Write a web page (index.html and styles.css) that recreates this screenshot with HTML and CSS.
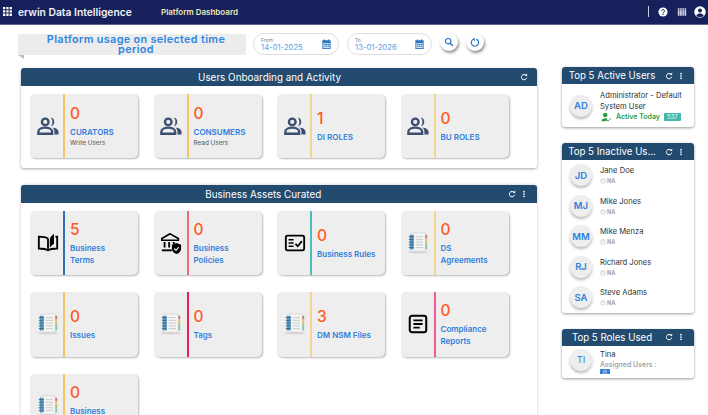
FILE: index.html
```html
<!DOCTYPE html>
<html lang="en">
<head>
<meta charset="utf-8">
<title>Platform Dashboard</title>
<link rel="stylesheet" href="styles.css">
</head>
<body>
<svg class="defs" width="0" height="0" aria-hidden="true">
  <defs>
    <symbol id="i-users" viewBox="0 0 24 24">
      <circle cx="9" cy="7.500" r="3.600" fill="none" stroke="currentColor" stroke-width="2.600"/>
      <path d="M15 2.800a4.800 4.800 0 0 1 0 9.400c1.100-1.200 1.800-2.800 1.800-4.700S16.100 4 15 2.800z" fill="currentColor"/>
      <path d="M1.500 20.500v-2.300c0-2.800 3.800-4.400 7.500-4.400s7.500 1.600 7.500 4.400v2.300z" fill="none" stroke="currentColor" stroke-width="2.600"/>
      <path d="M17 13.500c3.200.4 6.500 2 6.500 4.700v3h-4.500v-3c0-1.900-.8-3.400-2-4.700z" fill="currentColor"/>
    </symbol>
    <symbol id="i-book" viewBox="0 0 24 24">
      <path d="M12 7C10 5.600 7 5 2 5v13c5 0 8 .6 10 2 2-1.400 5-2 10-2V5h-2" fill="none" stroke="currentColor" stroke-width="2"/>
      <path d="M12 7v13" stroke="currentColor" stroke-width="2"/>
      <path d="M14 9c0-3 2-5 4.500-7v11c-2 1-3.500 2.500-4.500 4z" fill="currentColor"/>
    </symbol>
    <symbol id="i-bank" viewBox="0 0 24 24">
      <path d="M11 2 2 7v2h18V7z" fill="none" stroke="currentColor" stroke-width="1.800"/>
      <path d="M5 11v6M10 11v6M15 11v2" stroke="currentColor" stroke-width="2"/>
      <path d="M2 19h11v2H2z" fill="currentColor"/>
      <path d="M18 12l5 2v4c0 3-2.200 5-5 6-2.800-1-5-3-5-6v-4z" fill="currentColor"/>
      <path d="M15.500 18l2 2 3-3.500" fill="none" stroke="#eee" stroke-width="1.300"/>
    </symbol>
    <symbol id="i-rules" viewBox="0 0 24 24">
      <rect x="2" y="4" width="20" height="16" rx="2" fill="none" stroke="currentColor" stroke-width="2"/>
      <path d="M5 8.500h5.500M5 12h5.500M5 15.500h5.500" stroke="currentColor" stroke-width="1.800"/>
      <path d="M12.500 13l2.500 2.500 4.500-5.500" fill="none" stroke="currentColor" stroke-width="2"/>
    </symbol>
    <symbol id="i-article" viewBox="0 0 24 24">
      <rect x="3" y="3" width="18" height="18" rx="2.500" fill="none" stroke="currentColor" stroke-width="2.200"/>
      <path d="M7 8h10M7 12h10M7 16h7" stroke="currentColor" stroke-width="2"/>
    </symbol>
    <symbol id="i-note" viewBox="0 0 24 24">
      <ellipse cx="12" cy="22" rx="11" ry="1.200" fill="#d4d4d4"/>
      <rect x="4" y="1" width="16" height="20" rx="1" fill="#f4f4f4" stroke="#c9c9c9" stroke-width=".6"/>
      <rect x="3" y="3" width="4.500" height="16" fill="#5f9cc2"/>
      <path d="M2 5h5M2 8h5M2 11h5M2 14h5M2 17h5" stroke="#2c6488" stroke-width="1"/>
      <path d="M9.500 5h8M9.500 8h8M9.500 11h8M9.500 14h8M9.500 17h8" stroke="#c2c2c2" stroke-width=".9"/>
      <rect x="20" y="3" width="2" height="4" fill="#c9766e"/>
      <rect x="20" y="7" width="2" height="4" fill="#e3c074"/>
      <rect x="20" y="11" width="2" height="4" fill="#a3c67e"/>
      <rect x="20" y="15" width="2" height="4" fill="#7cc4be"/>
    </symbol>
    <symbol id="i-cal" viewBox="0 0 24 24">
      <path d="M3 4h3V2h3v2h6V2h3v2h3v19H3z" fill="#2f74c0"/>
      <path d="M5 10h14v11H5z" fill="#cfe2f6"/>
      <path d="M7 12h3v2H7zM11 12h3v2h-3zM15 12h3v2h-3zM7 16h3v2H7zM11 16h3v2h-3zM15 16h3v2h-3z" fill="#2f74c0"/>
    </symbol>
    <symbol id="i-refresh" viewBox="0 0 24 24">
      <path d="M18.500 7.500A8 8 0 1 0 20 14" fill="none" stroke="currentColor" stroke-width="3"/>
      <path d="M14 9h7.500V1.500z" fill="currentColor"/>
    </symbol>
    <symbol id="i-dots" viewBox="0 0 24 24">
      <circle cx="12" cy="5" r="2.600" fill="currentColor"/>
      <circle cx="12" cy="12" r="2.600" fill="currentColor"/>
      <circle cx="12" cy="19" r="2.600" fill="currentColor"/>
    </symbol>
    <symbol id="i-clock" viewBox="0 0 24 24">
      <circle cx="12" cy="12" r="9.500" fill="none" stroke="currentColor" stroke-width="2"/>
      <path d="M12 6v7h-1" fill="none" stroke="currentColor" stroke-width="2"/>
    </symbol>
  </defs>
</svg>

<header class="topbar">
  <svg class="apps" viewBox="0 0 9 9" aria-hidden="true">
    <path d="M0 0h2.300v2.300H0zM3.300 0h2.300v2.300H3.300zM6.600 0h2.300v2.300H6.600zM0 3.300h2.300v2.300H0zM3.300 3.300h2.300v2.300H3.300zM6.600 3.300h2.300v2.300H6.600zM0 6.600h2.300v2.300H0zM3.300 6.600h2.300v2.300H3.300zM6.600 6.600h2.300v2.300H6.600z" fill="#fff"/>
  </svg>
  <span class="brand">erwin Data Intelligence</span>
  <span class="page-name">Platform Dashboard</span>
  <span class="top-actions">
    <span class="divider"></span>
    <svg class="top-icon" viewBox="0 0 24 24" aria-hidden="true">
      <circle cx="12" cy="12" r="11" fill="#fff"/>
      <path d="M8.500 9.500a3.500 3.500 0 1 1 5.400 3c-1.300.8-1.900 1.400-1.900 2.700" fill="none" stroke="#16215c" stroke-width="2.400"/>
      <rect x="10.700" y="16.500" width="2.600" height="2.600" fill="#16215c"/>
    </svg>
    <svg class="top-icon lib" viewBox="0 0 24 24" aria-hidden="true">
      <path d="M2 3h4v18H2zM7.500 3h4v18h-4zM13 3h3.500v18H13zM18 3h4v18h-4z" fill="#d9dbe6"/>
      <path d="M2 7h4M7.500 7h4M13 7h3.500M18 7h4" stroke="#16215c" stroke-width="1"/>
    </svg>
    <svg class="top-icon acct" viewBox="0 0 24 24" aria-hidden="true">
      <circle cx="12" cy="12" r="11.500" fill="#fff"/>
      <circle cx="12" cy="9" r="4" fill="#16215c"/>
      <path d="M4.500 19c1.500-3 4.500-4.200 7.500-4.200s6 1.200 7.500 4.200c-2 2-4.700 3-7.500 3s-5.500-1-7.500-3z" fill="#16215c"/>
    </svg>
  </span>
</header>

<div class="page">
  <main class="left">
    <div class="toolbar">
      <h1 class="banner">Platform usage on selected time period</h1>
      <div class="date-field">
        <div class="date-text"><span class="date-label">From</span><span class="date-value">14-01-2025</span></div>
        <svg class="cal" aria-hidden="true"><use href="#i-cal"/></svg>
      </div>
      <div class="date-field to">
        <div class="date-text"><span class="date-label">To</span><span class="date-value">13-01-2026</span></div>
        <svg class="cal" aria-hidden="true"><use href="#i-cal"/></svg>
      </div>
      <button class="round-btn" aria-label="Search">
        <svg viewBox="0 0 24 24" aria-hidden="true"><circle cx="10" cy="10" r="6.500" fill="none" stroke="#2f74c0" stroke-width="2.800"/><path d="M15 15l6.500 6.500" stroke="#2f74c0" stroke-width="3.200"/></svg>
      </button>
      <button class="round-btn" aria-label="Reset">
        <svg viewBox="0 0 24 24" aria-hidden="true"><path d="M8 5.500a8.800 8.800 0 1 0 7-.3" fill="none" stroke="#2f74c0" stroke-width="2.800"/><path d="M11.500 1v9L6 5.500z" fill="#2f74c0"/></svg>
      </button>
    </div>

    <section class="panel first">
      <div class="panel-head">
        <span class="panel-title">Users Onboarding and Activity</span>
        <span class="head-icons"><svg class="mini"><use href="#i-refresh"/></svg></span>
      </div>
      <div class="cards">
        <article class="card">
          <div class="card-icon navy"><svg><use href="#i-users"/></svg></div>
          <div class="card-body gold"><div class="num">0</div><div class="label">CURATORS</div><div class="sub">Write Users</div></div>
        </article>
        <article class="card">
          <div class="card-icon navy"><svg><use href="#i-users"/></svg></div>
          <div class="card-body gold"><div class="num">0</div><div class="label">CONSUMERS</div><div class="sub">Read Users</div></div>
        </article>
        <article class="card">
          <div class="card-icon navy"><svg><use href="#i-users"/></svg></div>
          <div class="card-body sand"><div class="num">1</div><div class="label">DI ROLES</div></div>
        </article>
        <article class="card">
          <div class="card-icon navy"><svg><use href="#i-users"/></svg></div>
          <div class="card-body sand"><div class="num">0</div><div class="label">BU ROLES</div></div>
        </article>
      </div>
    </section>

    <section class="panel second">
      <div class="panel-head">
        <span class="panel-title">Business Assets Curated</span>
        <span class="head-icons"><svg class="mini"><use href="#i-refresh"/></svg><svg class="mini"><use href="#i-dots"/></svg></span>
      </div>
      <div class="cards">
        <article class="card">
          <div class="card-icon"><svg><use href="#i-book"/></svg></div>
          <div class="card-body blue"><div class="num">5</div><div class="label">Business<br>Terms</div></div>
        </article>
        <article class="card">
          <div class="card-icon"><svg><use href="#i-bank"/></svg></div>
          <div class="card-body rose"><div class="num">0</div><div class="label">Business<br>Policies</div></div>
        </article>
        <article class="card">
          <div class="card-icon"><svg><use href="#i-rules"/></svg></div>
          <div class="card-body teal"><div class="num">0</div><div class="label">Business Rules</div></div>
        </article>
        <article class="card">
          <div class="card-icon"><svg><use href="#i-note"/></svg></div>
          <div class="card-body sand"><div class="num">0</div><div class="label">DS<br>Agreements</div></div>
        </article>
        <article class="card">
          <div class="card-icon"><svg><use href="#i-note"/></svg></div>
          <div class="card-body gold"><div class="num">0</div><div class="label">Issues</div></div>
        </article>
        <article class="card">
          <div class="card-icon"><svg><use href="#i-note"/></svg></div>
          <div class="card-body crimson"><div class="num">0</div><div class="label">Tags</div></div>
        </article>
        <article class="card">
          <div class="card-icon"><svg><use href="#i-note"/></svg></div>
          <div class="card-body sand"><div class="num">3</div><div class="label">DM NSM Files</div></div>
        </article>
        <article class="card">
          <div class="card-icon"><svg><use href="#i-article"/></svg></div>
          <div class="card-body pink"><div class="num">0</div><div class="label">Compliance<br>Reports</div></div>
        </article>
        <article class="card">
          <div class="card-icon"><svg><use href="#i-note"/></svg></div>
          <div class="card-body gold"><div class="num">0</div><div class="label">Business<br>&nbsp;</div></div>
        </article>
      </div>
    </section>
  </main>

  <aside class="right">
    <section class="side-panel">
      <div class="side-head"><span class="side-title">Top 5 Active Users</span><svg class="mini"><use href="#i-refresh"/></svg><svg class="mini"><use href="#i-dots"/></svg></div>
      <div class="person tall">
        <div class="avatar">AD</div>
        <div class="person-info">
          <div class="person-name wrap">Administrator - Default System User</div>
          <div class="active-line">
            <svg class="active-icon" viewBox="0 0 24 24" aria-hidden="true"><circle cx="9" cy="7" r="5.500" fill="#2e9e45"/><path d="M0 22c0-5 4-7 9-7 2 0 4 .4 5.500 1.200L11 22z" fill="#2e9e45"/><path d="M13 19l3 3 6-7" fill="none" stroke="#2e9e45" stroke-width="2.400"/></svg>
            <span class="active-text">Active Today</span><span class="count">537</span>
          </div>
        </div>
      </div>
    </section>

    <section class="side-panel">
      <div class="side-head"><span class="side-title">Top 5 Inactive Us...</span><svg class="mini"><use href="#i-refresh"/></svg><svg class="mini"><use href="#i-dots"/></svg></div>
      <div class="person-list">
        <div class="person"><div class="avatar">JD</div><div class="person-info"><div class="person-name">Jane Doe</div><div class="na"><svg><use href="#i-clock"/></svg>NA</div></div></div>
        <div class="person"><div class="avatar">MJ</div><div class="person-info"><div class="person-name">Mike Jones</div><div class="na"><svg><use href="#i-clock"/></svg>NA</div></div></div>
        <div class="person"><div class="avatar">MM</div><div class="person-info"><div class="person-name">Mike Menza</div><div class="na"><svg><use href="#i-clock"/></svg>NA</div></div></div>
        <div class="person"><div class="avatar">RJ</div><div class="person-info"><div class="person-name">Richard Jones</div><div class="na"><svg><use href="#i-clock"/></svg>NA</div></div></div>
        <div class="person"><div class="avatar">SA</div><div class="person-info"><div class="person-name">Steve Adams</div><div class="na"><svg><use href="#i-clock"/></svg>NA</div></div></div>
      </div>
    </section>

    <section class="side-panel roles">
      <div class="side-head"><span class="side-title">Top 5 Roles Used</span><svg class="mini"><use href="#i-refresh"/></svg><svg class="mini"><use href="#i-dots"/></svg></div>
      <div class="person role">
        <div class="avatar thin">TI</div>
        <div class="person-info">
          <div class="person-name">Tina</div>
          <div class="assigned">Assigned Users :</div>
          <span class="role-count">0</span>
        </div>
      </div>
    </section>
  </aside>
</div>
</body>
</html>
```

FILE: styles.css
```css
* { box-sizing: border-box; }

html, body {
  margin: 0;
  height: 100%;
  overflow: hidden;
}

body {
  display: flex;
  flex-direction: column;
  background: #fff;
  color: #333;
  font-family: "Inter", "Liberation Sans", sans-serif;
}

.defs { display: block; height: 0; }

.topbar {
  flex: none;
  height: 25px;
  display: flex;
  align-items: center;
  padding: 0 2px 1px 3px;
  background: #16215c;
  border-bottom: 1px solid #5d6591;
}

.apps { width: 9px; height: 9px; flex: none; }

.brand {
  margin-left: 6px;
  width: 143px;
  color: #eef0f6;
  font-size: 10.300px;
  font-weight: 600;
  white-space: nowrap;
}

.page-name {
  color: #f1e6b4;
  font-size: 8px;
  font-weight: 600;
  white-space: nowrap;
}

.top-actions {
  margin-left: auto;
  display: flex;
  align-items: center;
}

.divider {
  width: 1px;
  height: 11px;
  margin-right: 8px;
  background: #c9cbd8;
}

.top-icon { width: 10px; height: 10px; margin: 1px 8px 0 1px; display: block; }
.top-icon.lib { margin: 1px 6px 0 1px; }
.top-icon.acct { width: 12px; height: 12px; margin: 1px 0 0 1px; }

.page {
  flex: 1;
  min-height: 0;
  display: flex;
  align-items: flex-start;
  padding-left: 18px;
}

.left { width: 519px; flex: none; }

.toolbar {
  display: flex;
  align-items: flex-start;
  height: 43px;
  padding-top: 8px;
}

.banner {
  position: relative;
  width: 228px;
  height: 21px;
  margin: 1px 7px 0 0;
  padding: 1px 14px 0 22px;
  background: #ececec;
  border-radius: 2px;
  color: #2f86e0;
  font-size: 10.800px;
  line-height: 10px;
  font-weight: 600;
  letter-spacing: .35px;
  text-align: center;
}

.banner::after {
  content: "";
  position: absolute;
  left: 0;
  bottom: -4px;
  border-top: 4px solid #bdbdbd;
  border-left: 6px solid transparent;
}

.date-field {
  width: 86px;
  height: 22px;
  margin-right: 8px;
  padding: 0 6px 0 7px;
  display: flex;
  align-items: center;
  justify-content: space-between;
  border: 1px solid #dedede;
  border-radius: 11px;
  background: #fff;
}

.date-field.to { width: 85px; margin-right: 8px; }

.date-text { display: flex; flex-direction: column; }

.date-label {
  color: #6a7f97;
  font-size: 5px;
  line-height: 6px;
}

.date-value {
  color: #5a9fe6;
  font-size: 7.700px;
  line-height: 9px;
}

.cal { width: 11px; height: 12px; }

.round-btn {
  width: 18px;
  height: 18px;
  margin-right: 8px;
  padding: 4px;
  display: block;
  border: 0;
  border-radius: 50%;
  background: #fff;
  box-shadow: 1px 2px 3px rgba(0, 0, 0, .45);
}

.round-btn svg { display: block; width: 10px; height: 10px; }

.panel {
  margin-left: 3px;
  width: 516px;
  background: #fff;
  box-shadow: 0 1px 3px rgba(0, 0, 0, .35);
  border-radius: 3px;
}

.panel.first { height: 100px; }

.panel.second {
  margin-top: 17px;
  box-shadow: 0 0 3px rgba(0, 0, 0, .25);
  padding-bottom: 20px;
}

.panel-head {
  height: 17.500px;
  display: flex;
  align-items: center;
  padding-right: 9px;
  background: #234b70;
  border-radius: 3px 3px 0 0;
  color: #fff;
}

.panel-title {
  flex: 1;
  padding-right: 2px;
  font-size: 9.900px;
  font-weight: 400;
  text-align: center;
}

.head-icons { display: flex; gap: 4.500px; }

.mini { width: 8px; height: 8px; flex: none; color: #fff; }

.cards {
  display: grid;
  grid-template-columns: repeat(4, 108px);
  column-gap: 15.500px;
  row-gap: 17px;
  padding: 8px 9px;
}

.card {
  height: 64.500px;
  display: flex;
  background: #eee;
  border-radius: 5px;
  box-shadow: 1px 1px 2px rgba(0, 0, 0, .28);
}

.card-icon {
  width: 33px;
  flex: none;
  display: flex;
  align-items: center;
  justify-content: center;
  color: #000;
}

.card-icon svg { width: 22px; height: 22px; margin-left: 2px; }
.card-icon.navy { color: #3d4f70; }

.card-body {
  flex: 1;
  min-width: 0;
  display: flex;
  flex-direction: column;
  justify-content: center;
  padding-left: 5px;
  border-left: 2px solid #f5c463;
}

.card-body.gold { border-left-color: #f5c463; }
.card-body.sand { border-left-color: #f5d48f; }
.card-body.blue { border-left-color: #2f6fb5; }
.card-body.rose { border-left-color: #ee6a7c; }
.card-body.teal { border-left-color: #4bbdbd; }
.card-body.crimson { border-left-color: #e3245a; }
.card-body.pink { border-left-color: #ec5a97; }

.num {
  color: #ff5a27;
  font-size: 15.500px;
  line-height: 20px;
  font-weight: 500;
}

.label {
  margin-top: 2px;
  color: #2f80dc;
  font-size: 8px;
  line-height: 12px;
  font-weight: 600;
  white-space: nowrap;
}

.sub {
  color: #555;
  font-size: 6.400px;
  line-height: 10px;
}

.right {
  width: 132px;
  flex: none;
  margin: 42px 0 0 25px;
  display: flex;
  flex-direction: column;
  gap: 16px;
}

.side-panel {
  background: #fff;
  border-radius: 3px;
  box-shadow: 0 1px 3px rgba(0, 0, 0, .4);
}

.side-head {
  height: 17px;
  display: flex;
  align-items: center;
  gap: 4.500px;
  padding: 0 9px 0 2px;
  background: #234b70;
  border-radius: 3px 3px 0 0;
  color: #fff;
}

.side-title {
  flex: 1;
  min-width: 0;
  font-size: 9.700px;
  white-space: nowrap;
  text-align: center;
}

.person {
  height: 30.500px;
  display: flex;
  align-items: center;
  gap: 8px;
  padding-left: 8px;
}

.person.tall { height: 43px; }
.person.role { height: 32px; align-items: flex-start; padding-top: 3px; }

.avatar {
  width: 22px;
  height: 22px;
  flex: none;
  display: flex;
  align-items: center;
  justify-content: center;
  background: #eee;
  border-radius: 50%;
  box-shadow: 0 2px 3px rgba(0, 0, 0, .28);
  color: #2f80dc;
  font-size: 9.500px;
  font-weight: 600;
}

.avatar.thin { font-weight: 400; }

.person-info { min-width: 0; flex: 1; }

.person-name {
  color: #333;
  font-size: 7.600px;
  line-height: 11px;
  white-space: nowrap;
}

.person-name.wrap { white-space: normal; }

.active-line {
  display: flex;
  align-items: center;
}

.active-icon { width: 11px; height: 10px; flex: none; margin: 0 4px 0 1px; }

.active-text {
  color: #2e9e45;
  font-size: 7px;
  font-weight: 600;
  white-space: nowrap;
}

.count {
  margin-left: 4px;
  padding: 0 3px;
  background: #45b8ac;
  border-radius: 1px;
  color: #dff;
  font-size: 6px;
  line-height: 8px;
}

.na {
  display: flex;
  align-items: center;
  gap: 1px;
  margin-top: 1px;
  color: #a4a4a4;
  font-size: 5.500px;
  line-height: 8px;
  font-weight: 700;
}

.na svg { width: 6px; height: 6px; }

.assigned {
  color: #9a9a9a;
  font-size: 7px;
  line-height: 9px;
  font-weight: 500;
}

.role-count {
  display: block;
  width: 10px;
  height: 5px;
  overflow: hidden;
  background: #2f80dc;
  border-radius: 1px 1px 0 0;
  color: #fff;
  font-size: 6px;
  line-height: 7px;
  text-align: center;
}
```
